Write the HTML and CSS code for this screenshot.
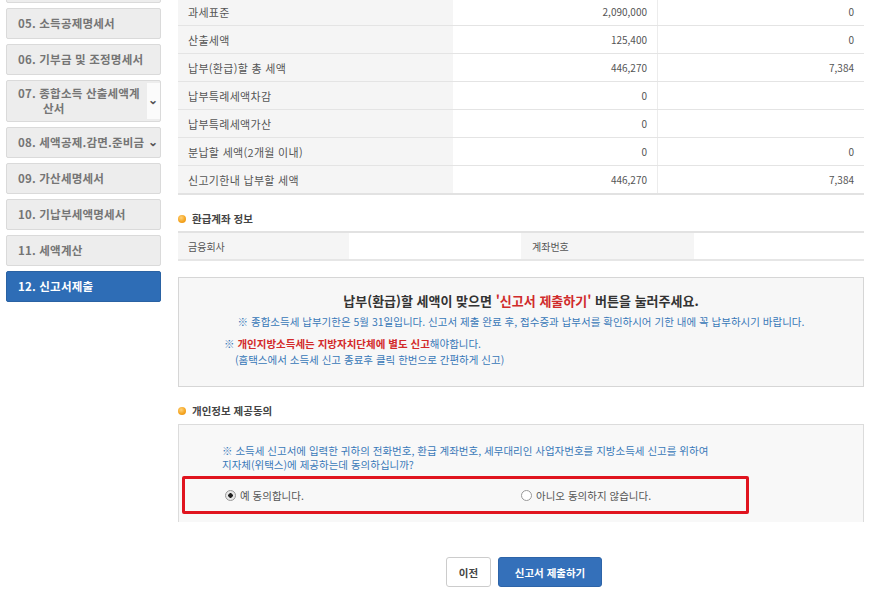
FILE: index.html
```html
<!DOCTYPE html>
<html lang="ko">
<head>
  <meta charset="UTF-8">
  <title>신고서제출</title>
  <link rel="stylesheet" href="styles.css">
</head>
<body>
<div class="wrap">
  <!-- 좌측 단계 메뉴 -->
  <ul class="steps">
    <li class="step"></li>
    <li class="step">05. 소득공제명세서</li>
    <li class="step">06. 기부금 및 조정명세서</li>
    <li class="step tall has-more">07. 종합소득 산출세액계<br><span class="indent">산서</span><span class="chev">&#8964;</span></li>
    <li class="step has-more">08. 세액공제.감면.준비금<span class="chev">&#8964;</span></li>
    <li class="step">09. 가산세명세서</li>
    <li class="step">10. 기납부세액명세서</li>
    <li class="step">11. 세액계산</li>
    <li class="step active">12. 신고서제출</li>
  </ul>

  <div class="main">
    <table class="tax">
      <tr><th>과세표준</th><td>2,090,000</td><td>0</td></tr>
      <tr><th>산출세액</th><td>125,400</td><td>0</td></tr>
      <tr><th>납부(환급)할 총 세액</th><td>446,270</td><td>7,384</td></tr>
      <tr><th>납부특례세액차감</th><td>0</td><td></td></tr>
      <tr><th>납부특례세액가산</th><td>0</td><td></td></tr>
      <tr><th>분납할 세액(2개월 이내)</th><td>0</td><td>0</td></tr>
      <tr><th>신고기한내 납부할 세액</th><td>446,270</td><td>7,384</td></tr>
    </table>

    <h3 class="sec-title"><span class="bullet"></span>환급계좌 정보</h3>
    <table class="account">
      <tr>
        <th class="c1">금융회사</th><td class="c2"></td>
        <th class="c3">계좌번호</th><td></td>
      </tr>
    </table>

    <div class="notice">
      <p class="notice-head">납부(환급)할 세액이 맞으면 <em>'신고서 제출하기'</em> 버튼을 눌러주세요.</p>
      <p class="note">※ 종합소득세 납부기한은 5월 31일입니다. 신고서 제출 완료 후, 접수증과 납부서를 확인하시어 기한 내에 꼭 납부하시기 바랍니다.</p>
      <p class="note left">※ <strong>개인지방소득세는 지방자치단체에 별도 신고</strong>해야합니다.</p>
      <p class="note left sub">(홈택스에서 소득세 신고 종료후 클릭 한번으로 간편하게 신고)</p>
    </div>

    <h3 class="sec-title"><span class="bullet"></span>개인정보 제공동의</h3>
    <div class="consent">
      <p class="consent-text">※ 소득세 신고서에 입력한 귀하의 전화번호, 환급 계좌번호, 세무대리인 사업자번호를 지방소득세 신고를 위하여<br>지자체(위택스)에 제공하는데 동의하십니까?</p>
      <div class="choices">
        <label class="choice"><span class="radio on"></span>예 동의합니다.</label>
        <label class="choice"><span class="radio"></span>아니오 동의하지 않습니다.</label>
      </div>
    </div>

    <div class="actions">
      <button class="btn">이전</button>
      <button class="btn primary">신고서 제출하기</button>
    </div>
  </div>
</div>
</body>
</html>
```

FILE: styles.css
```css
body {
  margin: 0;
  background-color: #fff;
  font-family: "Noto Sans CJK KR", "Noto Sans", sans-serif;
  color: #444;
}

.wrap {
  display: flex;
  align-items: flex-start;
}

/* left menu */
.steps {
  list-style: none;
  margin: -28px 0 0 6px;
  padding: 0;
  width: 155px;
  display: flex;
  flex-direction: column;
  gap: 5px;
}

.step {
  position: relative;
  box-sizing: border-box;
  height: 31px;
  padding: 7px 0 0 11px;
  background-color: #ededed;
  border: 1px solid #dadada;
  border-radius: 2px;
  font-size: 11.5px;
  font-weight: bold;
  letter-spacing: 0.2px;
  color: #757575;
  line-height: 15px;
  white-space: nowrap;
}

.step.tall {
  height: 42px;
  padding-top: 5px;
}

.step .indent {
  padding-left: 25px;
}

.step.has-more {
  padding-right: 14px;
}

.chev {
  position: absolute;
  right: 2px;
  top: 5px;
  font-size: 12px;
  color: #555;
}

.step.tall .chev {
  right: 0;
  top: 2px;
  width: 13px;
  height: 36px;
  padding-top: 8px;
  box-sizing: border-box;
  background-color: #fbfbfb;
  text-align: center;
}

.step.active {
  background-color: #2e6db6;
  border-color: #2a62a3;
  color: #fff;
}

/* main area */
.main {
  margin-left: 17px;
  width: 686px;
  margin-top: -2px;
}

table {
  border-collapse: collapse;
  width: 100%;
}

.tax th, .tax td {
  height: 27px;
  padding: 0 10px;
  border-bottom: 1px solid #e4e4e4;
  font-size: 10px;
  font-weight: normal;
}

.tax th {
  width: 255px;
  text-align: left;
  background-color: #f5f5f5;
  color: #555;
  font-size: 11px;
  letter-spacing: 0.3px;
}

.tax td {
  text-align: right;
  color: #555;
}

.tax td + td {
  border-left: 1px solid #ececec;
  width: 186px;
}

.tax tr:last-child th, .tax tr:last-child td {
  border-bottom: 2px solid #e2e2e2;
}

.sec-title {
  margin: 16px 0 5px;
  font-size: 10.5px;
  font-weight: bold;
  color: #444;
  display: flex;
  align-items: center;
}

.bullet {
  display: inline-block;
  width: 8px;
  height: 8px;
  margin-right: 6px;
  border-radius: 50%;
  background: radial-gradient(circle at 40% 35%, #ffd27a 0, #f5a623 55%, #e58a0c 100%);
}

.account {
  border-top: 2px solid #e2e2e2;
  table-layout: fixed;
}

.account th, .account td {
  height: 26px;
  padding: 0 10px;
  border-bottom: 2px solid #e6e6e6;
  font-size: 10px;
  font-weight: normal;
  text-align: left;
}

.account th {
  background-color: #f5f5f5;
  color: #555;
}

.account .c1 {
  width: 151px;
}

.account .c2 {
  width: 152px;
}

.account .c3 {
  width: 152px;
  padding-left: 11px;
}

.notice {
  margin-top: 16px;
  height: 110px;
  box-sizing: border-box;
  padding-top: 14px;
  background-color: #f7f7f7;
  border: 1px solid #d6d6d6;
}

.notice p {
  margin: 0;
}

.notice-head {
  text-align: center;
  font-size: 13px;
  font-weight: bold;
  color: #333;
  line-height: 18px;
}

.notice-head em {
  font-style: normal;
  color: #d02b2b;
}

.note {
  margin-top: 5px !important;
  font-size: 10.5px;
  color: #3878b8;
  text-align: center;
  line-height: 14px;
}

.note.left {
  text-align: left;
  padding-left: 45px;
  margin-top: 8px !important;
}

.note.left.sub {
  padding-left: 56px;
  margin-top: 2px !important;
}

.note strong {
  color: #d32a2a;
}

.consent {
  margin-top: 6px;
  height: 98px;
  box-sizing: border-box;
  padding-top: 19px;
  background-color: #f8f8f8;
  border: 1px solid #dcdcdc;
  border-bottom: none;
}

.consent-text {
  margin: 0 0 0 43px;
  font-size: 10.5px;
  line-height: 14px;
  color: #3878b8;
}

.choices {
  margin: 4px 0 0 3px;
  width: 567px;
  height: 38px;
  box-sizing: border-box;
  border: 3px solid #e0141e;
  border-radius: 2px;
  display: flex;
  align-items: center;
  padding-left: 40px;
}

.choice {
  display: flex;
  align-items: center;
  flex-shrink: 0;
  font-size: 10.5px;
  color: #555;
  width: 296px;
}

.radio {
  display: inline-block;
  box-sizing: border-box;
  width: 11px;
  height: 11px;
  margin-right: 4px;
  border: 1px solid #999;
  border-radius: 50%;
  background-color: #fff;
}

.radio.on {
  background: radial-gradient(circle, #222 0, #222 2px, #e8e8e8 2.5px);
}

.actions {
  display: flex;
  justify-content: center;
  gap: 7px;
  margin-top: 35px;
  padding-left: 6px;
}

.btn {
  height: 30px;
  width: 45px;
  padding: 0;
  border: 1px solid #ccc;
  border-radius: 3px;
  background-color: #fff;
  font-family: inherit;
  font-size: 10.5px;
  font-weight: bold;
  color: #444;
}

.btn.primary {
  width: 104px;
  background-color: #3470ba;
  border-color: #2d64a8;
  color: #fff;
}
```
